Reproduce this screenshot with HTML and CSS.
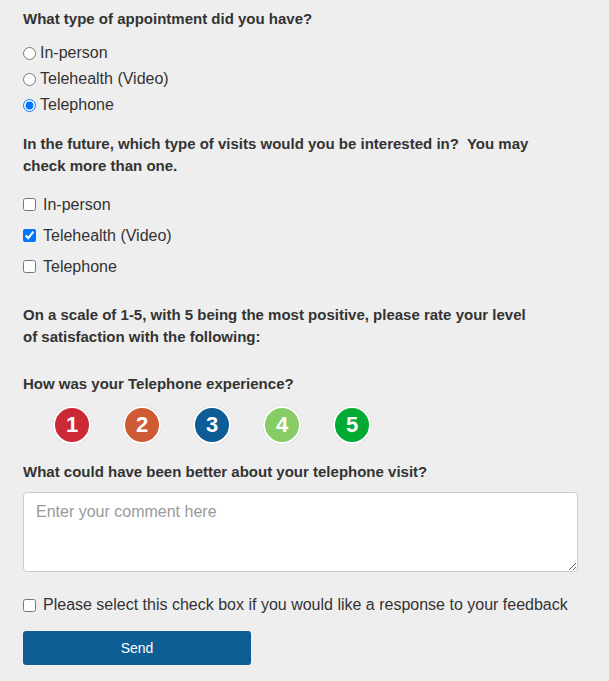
FILE: index.html
```html
<!DOCTYPE html>
<html>
<head>
<meta charset="utf-8">
<link rel="stylesheet" href="styles.css">
</head>
<body>
<form class="survey">
  <h2 class="q q-first">What type of appointment did you have?</h2>
  <div class="radios">
    <label class="radio"><input type="radio" name="type">In-person</label>
    <label class="radio"><input type="radio" name="type">Telehealth (Video)</label>
    <label class="radio"><input type="radio" name="type" checked>Telephone</label>
  </div>

  <h2 class="q q-future">In the future, which type of visits would you be interested in?&nbsp; You may check more than one.</h2>
  <div class="checks">
    <label class="check"><input type="checkbox">In-person</label>
    <label class="check"><input type="checkbox" checked>Telehealth (Video)</label>
    <label class="check"><input type="checkbox">Telephone</label>
  </div>

  <h2 class="q q-scale">On a scale of 1-5, with 5 being the most positive, please rate your level of satisfaction with the following:</h2>

  <h2 class="q q-exp">How was your Telephone experience?</h2>
  <div class="rating">
    <button type="button" class="dot r1">1</button>
    <button type="button" class="dot r2">2</button>
    <button type="button" class="dot r3">3</button>
    <button type="button" class="dot r4">4</button>
    <button type="button" class="dot r5">5</button>
  </div>

  <h2 class="q q-better">What could have been better about your telephone visit?</h2>
  <textarea class="comment" placeholder="Enter your comment here"></textarea>

  <label class="check check-response"><input type="checkbox">Please select this check box if you would like a response to your feedback</label>

  <button type="submit" class="send">Send</button>
</form>
</body>
</html>
```

FILE: styles.css
```css
html, body {
  margin: 0;
  padding: 0;
  background: #eeeeee;
}
body {
  font-family: "Liberation Sans", Arial, sans-serif;
  color: #333333;
}
.survey {
  padding: 8px 0 0 23px;
  width: 560px;
  display: flex;
  flex-direction: column;
  align-items: flex-start;
}
.q {
  margin: 0;
  font-size: 15px;
  font-weight: bold;
  line-height: 22px;
  color: #333333;
}
.radios {
  margin-top: 10px;
  display: flex;
  flex-direction: column;
}
.radio {
  display: flex;
  align-items: center;
  height: 26px;
  font-size: 16px;
}
.radio input {
  margin: 0 4px 0 0;
  width: 13px;
  height: 13px;
}
.q-future {
  margin-top: 15px;
  width: 550px;
}
.checks {
  margin-top: 12px;
  display: flex;
  flex-direction: column;
}
.check {
  display: flex;
  align-items: center;
  height: 31px;
  font-size: 16px;
}
.check input {
  margin: 0 7px 0 0;
  width: 13px;
  height: 13px;
}
.q-scale {
  margin-top: 22px;
  width: 505px;
}
.q-exp {
  margin-top: 25px;
}
.rating {
  margin: 11px 0 0 30px;
  display: flex;
  gap: 32px;
}
.dot {
  width: 38px;
  height: 38px;
  border-radius: 50%;
  border: 2px solid #ffffff;
  box-shadow: 0 0 1px rgba(0,0,0,0.25);
  padding: 0;
  color: #ffffff;
  font-family: "Liberation Sans", Arial, sans-serif;
  font-weight: bold;
  font-size: 22px;
  display: flex;
  align-items: center;
  justify-content: center;
}
.r1 { background: #cc2936; }
.r2 { background: #cf5b36; }
.r3 { background: #0d5c95; }
.r4 { background: #88cc66; }
.r5 { background: #00aa33; }
.q-better {
  margin-top: 17px;
}
.comment {
  margin-top: 9px;
  box-sizing: border-box;
  width: 555px;
  height: 80px;
  border: 1px solid #cccccc;
  border-radius: 4px;
  background: #ffffff;
  padding: 8px 12px;
  font-family: "Liberation Sans", Arial, sans-serif;
  font-size: 16px;
  line-height: 22px;
  color: #333333;
}
.comment::placeholder {
  color: #999999;
}
.check-response {
  margin-top: 22px;
  height: 22px;
}
.send {
  margin-top: 15px;
  width: 228px;
  height: 34px;
  border: none;
  border-radius: 3px;
  background: #0e5e96;
  color: #ffffff;
  font-family: "Liberation Sans", Arial, sans-serif;
  font-size: 14px;
}
```
